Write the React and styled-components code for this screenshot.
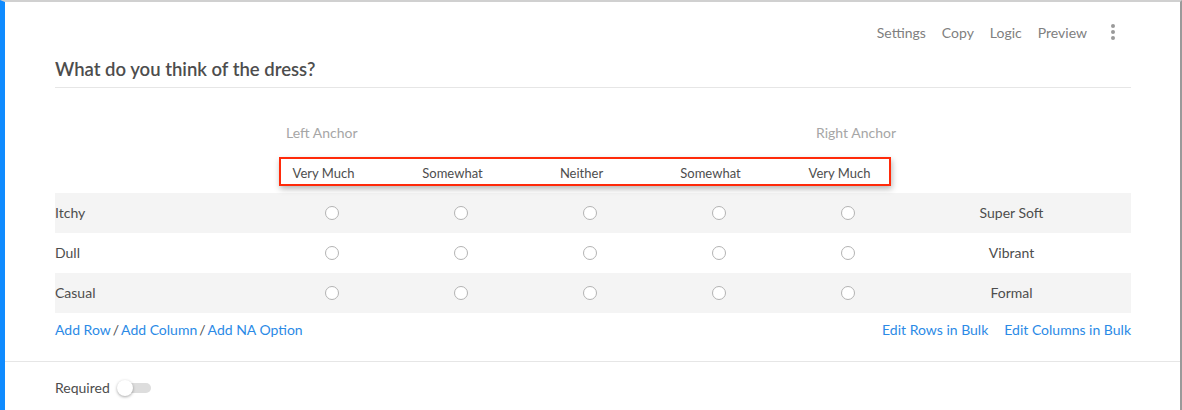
import React from "react";
import styled, { createGlobalStyle } from "styled-components";

const color = {
  blue: "#0f8bff",
  link: "#2b8ae6",
  text: "#4d4d4d",
  gray: "#808080",
  lightGray: "#a6a6a6",
  stripe: "#f4f4f4",
  line: "#e6e6e6",
  red: "#ff2a0a",
};

const GlobalStyle = createGlobalStyle`
  html, body {
    margin: 0;
    padding: 0;
    background: #fff;
  }
  body {
    font-family: Lato, "Liberation Sans", sans-serif;
    color: ${color.text};
  }
`;

const Card = styled.div`
  width: 1182px;
  height: 410px;
  box-sizing: border-box;
  border-top: 2px solid #d0d0d0;
  border-left: 5px solid ${color.blue};
  border-right: 2px solid #9a9a9a;
  overflow: hidden;
`;

const Body = styled.div`
  padding: 0 49px 0 50px;
`;

const Actions = styled.div`
  display: flex;
  justify-content: flex-end;
  align-items: center;
  gap: 16px;
  height: 20px;
  margin-top: 20px;
  padding-right: 16px;
`;

const Action = styled.span`
  font-size: 14px;
  color: ${color.gray};
`;

const Kebab = styled.div`
  display: flex;
  flex-direction: column;
  gap: 2px;
  margin-left: 8px;
  span {
    width: 4px;
    height: 4px;
    border-radius: 50%;
    background: #9a9a9a;
  }
`;

const Title = styled.div`
  font-size: 18.5px;
  font-weight: 600;
  color: ${color.text};
  margin-top: 17px;
  padding-bottom: 8px;
  border-bottom: 1px solid ${color.line};
  line-height: 20px;
`;

const AnchorRow = styled.div`
  display: flex;
  justify-content: space-between;
  width: 841px;
  box-sizing: border-box;
  padding-left: 231px;
  margin-top: 36px;
  font-size: 14px;
  color: ${color.lightGray};
  line-height: 18px;
`;

const LabelRow = styled.div`
  position: relative;
  display: grid;
  grid-template-columns: 204px repeat(5, 129px) 1fr;
  margin-top: 21px;
  height: 20px;
  align-items: center;
`;

const ColLabel = styled.span`
  grid-column: ${(p) => p.col};
  text-align: center;
  font-size: 13px;
  color: ${color.text};
`;

const Highlight = styled.div`
  position: absolute;
  left: 224px;
  top: -6px;
  width: 612px;
  height: 29px;
  box-sizing: border-box;
  border: 2px solid ${color.red};
  box-shadow: 1px 3px 6px rgba(0, 0, 0, 0.28);
  pointer-events: none;
`;

const Grid = styled.div`
  margin-top: 10px;
`;

const Row = styled.div`
  display: grid;
  grid-template-columns: 212px repeat(5, 129px) 1fr;
  align-items: center;
  height: 40px;
  padding-bottom: 1px;
  box-sizing: border-box;
  background: ${(p) => (p.striped ? color.stripe : "#fff")};
  font-size: 14px;
`;

const RowLabel = styled.span`
  color: ${color.text};
`;

const RightLabel = styled.span`
  text-align: center;
  padding-right: 20px;
  color: ${color.text};
`;

const RadioCell = styled.div`
  display: flex;
  justify-content: center;
`;

const Radio = styled.span`
  width: 12px;
  height: 12px;
  border-radius: 50%;
  border: 1px solid #b3b3b3;
  background: #fff;
`;

const Links = styled.div`
  display: flex;
  justify-content: space-between;
  align-items: center;
  height: 32px;
  font-size: 14px;
  color: ${color.link};
`;

const LinkGroup = styled.div`
  display: flex;
  gap: ${(p) => p.gap || 2}px;
  span.sep {
    color: ${color.text};
  }
`;

const Footer = styled.div`
  border-top: 1px solid ${color.line};
  margin-top: 16px;
  padding: 17px 50px 0;
  display: flex;
  align-items: center;
  gap: 6px;
  font-size: 14px;
  color: ${color.text};
`;

const Toggle = styled.div`
  position: relative;
  width: 32px;
  height: 10px;
  border-radius: 5px;
  background: #ddd;
  margin-left: 3px;
  &::after {
    content: "";
    position: absolute;
    left: -2px;
    top: -3px;
    width: 16px;
    height: 16px;
    border-radius: 50%;
    background: #fff;
    box-shadow: 0 1px 3px rgba(0, 0, 0, 0.35);
  }
`;

const columns = ["Very Much", "Somewhat", "Neither", "Somewhat", "Very Much"];
const rows = [
  ["Itchy", "Super Soft"],
  ["Dull", "Vibrant"],
  ["Casual", "Formal"],
];

const App = () => {
  return (
    <>
      <GlobalStyle />
      <Card>
        <Body>
          <Actions>
            <Action>Settings</Action>
            <Action>Copy</Action>
            <Action>Logic</Action>
            <Action>Preview</Action>
            <Kebab>
              <span />
              <span />
              <span />
            </Kebab>
          </Actions>
          <Title>What do you think of the dress?</Title>
          <AnchorRow>
            <span>Left Anchor</span>
            <span>Right Anchor</span>
          </AnchorRow>
          <LabelRow>
            {columns.map((c, i) => (
              <ColLabel key={i} col={i + 2}>
                {c}
              </ColLabel>
            ))}
            <Highlight />
          </LabelRow>
          <Grid>
            {rows.map(([left, right], i) => (
              <Row key={left} striped={i % 2 === 0}>
                <RowLabel>{left}</RowLabel>
                {columns.map((_, j) => (
                  <RadioCell key={j}>
                    <Radio />
                  </RadioCell>
                ))}
                <RightLabel>{right}</RightLabel>
              </Row>
            ))}
          </Grid>
          <Links>
            <LinkGroup>
              <span>Add Row</span>
              <span className="sep">/</span>
              <span>Add Column</span>
              <span className="sep">/</span>
              <span>Add NA Option</span>
            </LinkGroup>
            <LinkGroup gap={16}>
              <span>Edit Rows in Bulk</span>
              <span>Edit Columns in Bulk</span>
            </LinkGroup>
          </Links>
        </Body>
        <Footer>
          Required
          <Toggle />
        </Footer>
      </Card>
    </>
  );
};

export default App;
